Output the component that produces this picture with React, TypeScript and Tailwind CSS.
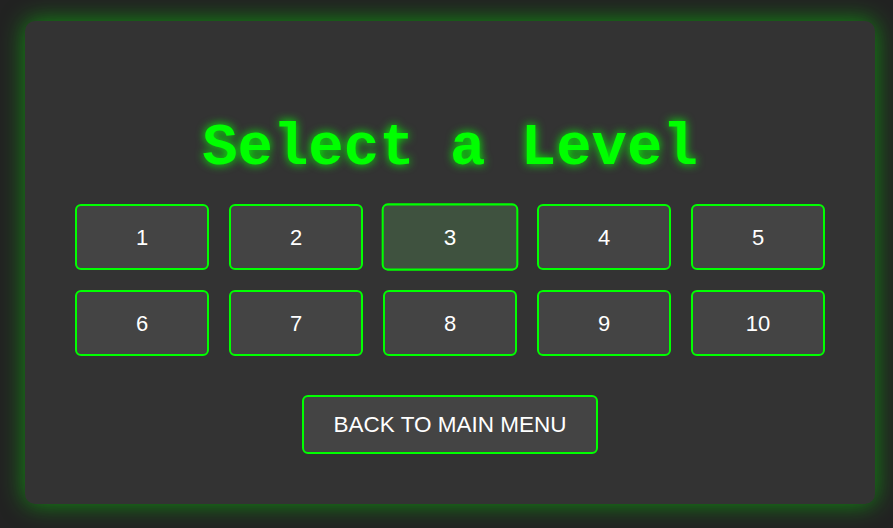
import React from "react";

export default function App() {
  const levels = [1, 2, 3, 4, 5, 6, 7, 8, 9, 10];
  return (
    <div className="w-[893px] h-[528px] bg-[#222222] overflow-hidden pt-[21px] pl-[25px]">
      <div className="w-[850px] h-[483px] bg-[#333333] rounded-[10px] shadow-[0_0_25px_rgba(0,255,0,0.5)] flex flex-col items-center">
        <h1
          className="mt-[97px] text-[59px] leading-[62px] font-bold text-[#00ff00] [text-shadow:0_0_10px_#00ff00]"
          style={{ fontFamily: '"Liberation Mono", "Courier New", monospace' }}
        >
          Select a Level
        </h1>
        <div className="mt-[24px] grid grid-cols-5 gap-[20px]">
          {levels.map((n) => (
            <button
              key={n}
              className={
                n === 3
                  ? "w-[134px] h-[66px] rounded-[6px] border-2 border-[#00ff00] bg-[#3f523f] text-white text-[22px] scale-[1.02] flex items-center justify-center"
                  : "w-[134px] h-[66px] rounded-[6px] border-2 border-[#00ff00] bg-[#444444] text-white text-[22px] flex items-center justify-center"
              }
              style={{ fontFamily: '"Liberation Sans", Arial, sans-serif' }}
            >
              {n}
            </button>
          ))}
        </div>
        <button
          className="mt-[39px] h-[59px] px-[30px] rounded-[6px] border-2 border-[#00ff00] bg-[#444444] text-white text-[22.5px]"
          style={{ fontFamily: '"Liberation Sans", Arial, sans-serif' }}
        >
          BACK TO MAIN MENU
        </button>
      </div>
    </div>
  );
}
